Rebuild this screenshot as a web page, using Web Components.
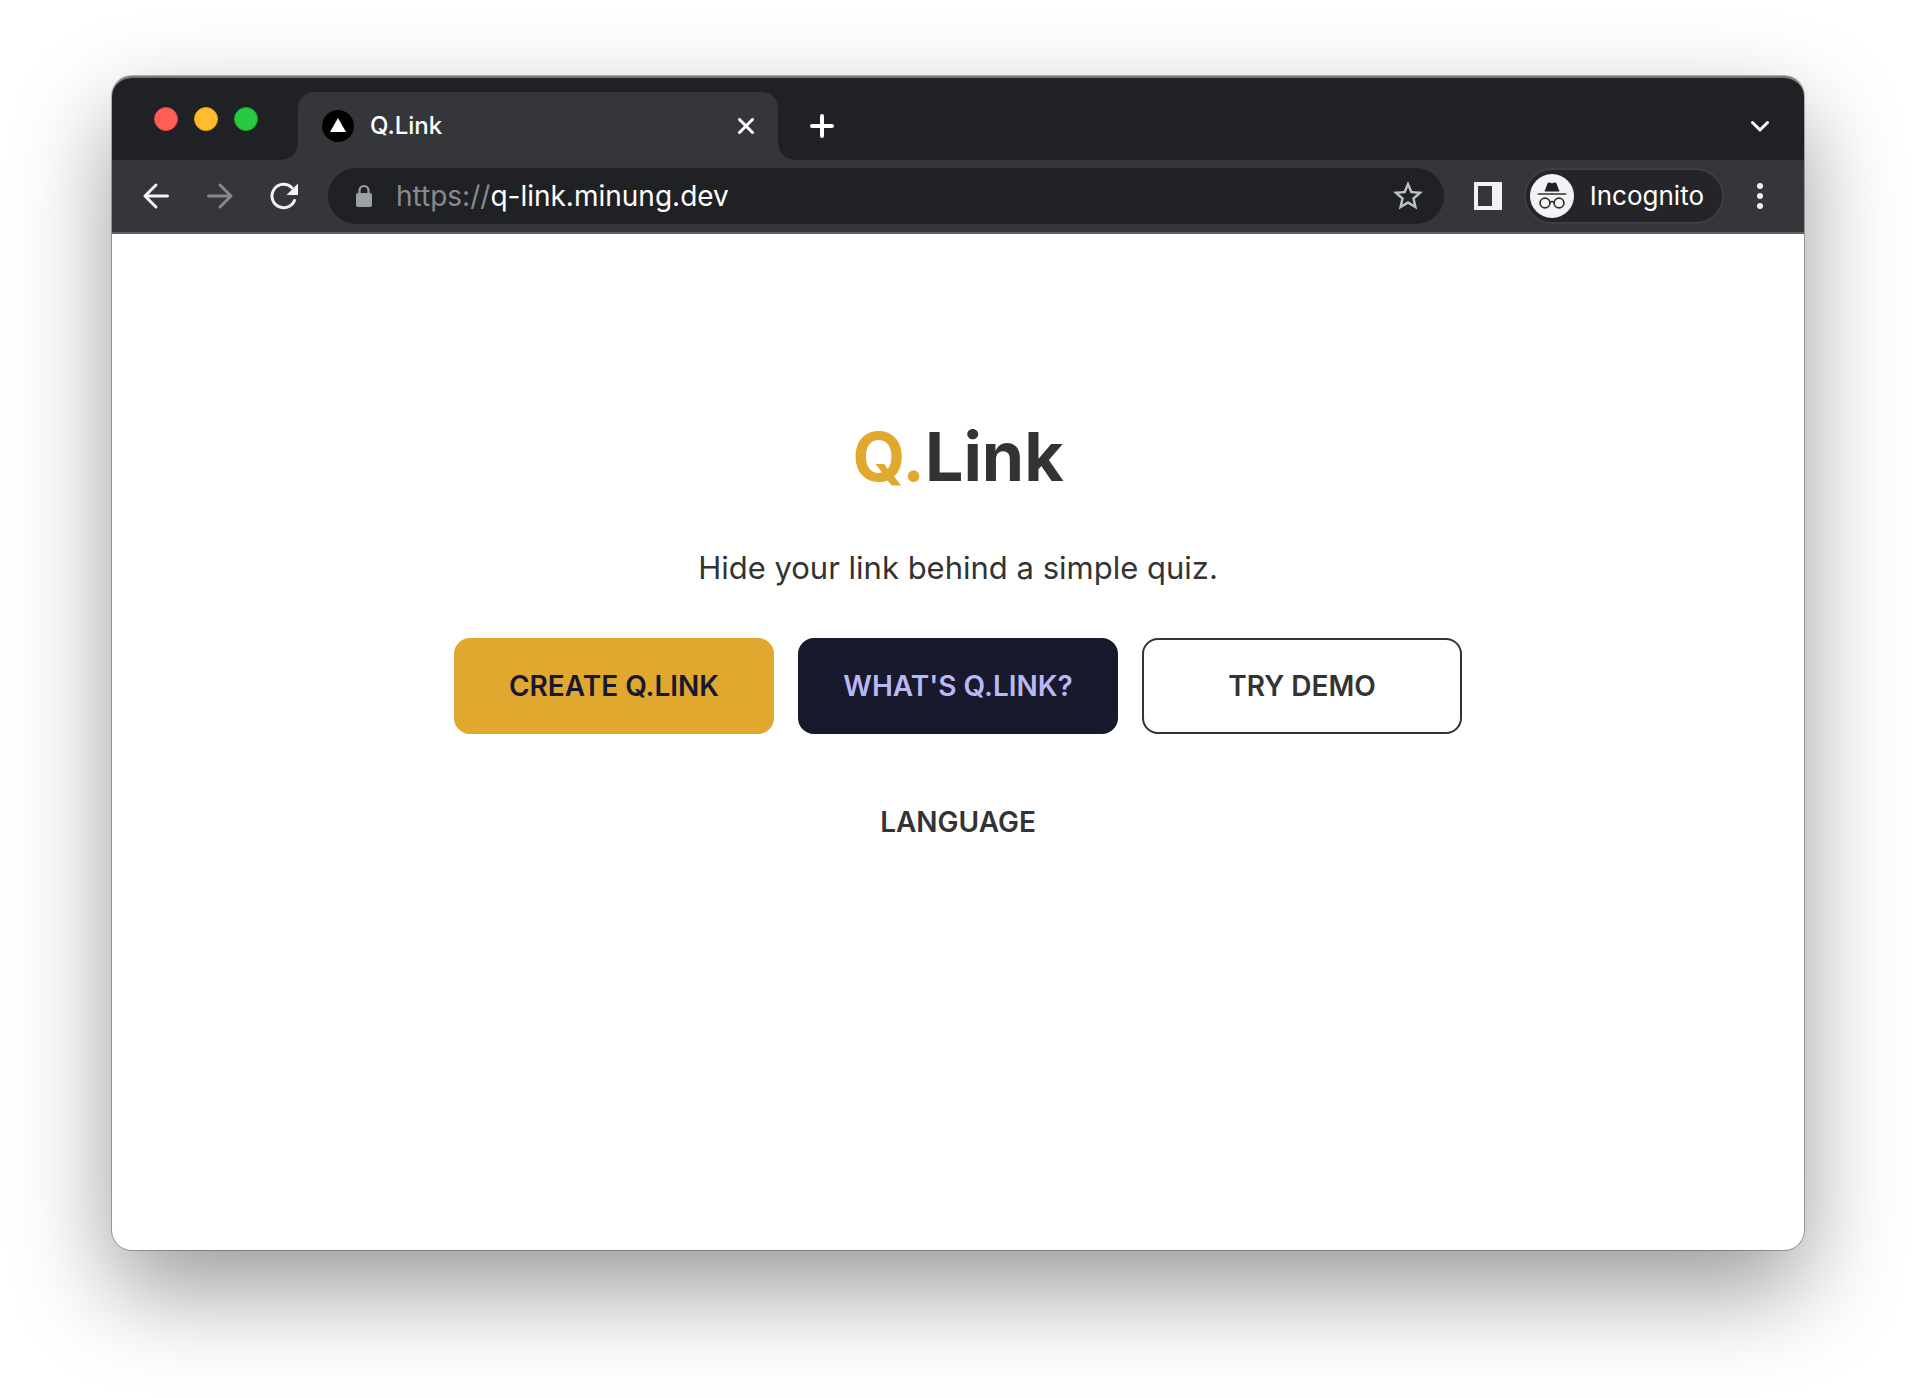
<!DOCTYPE html>
<html lang="en">
<head>
<meta charset="utf-8">
<title>Q.Link</title>
<style>
  html, body { margin: 0; }
  body {
    box-sizing: border-box;
    min-height: 100vh;
    padding: 76px 112px 148px;
    display: flex;
    background: #fff;
    font-family: Inter, "Noto Sans", sans-serif;
    color: #333;
  }
</style>
</head>
<body>
<browser-window>
  <tab-strip slot="chrome"><browser-tab>Q.Link</browser-tab></tab-strip>
  <browser-toolbar slot="chrome" scheme="https://" host="q-link.minung.dev"></browser-toolbar>
  <qlink-home></qlink-home>
</browser-window>
<script>
const define = (name, html, setup) => customElements.define(name, class extends HTMLElement {
  constructor() {
    super();
    this.attachShadow({ mode: 'open' }).innerHTML = `
      <style>
        *, *::before, *::after { box-sizing: border-box; }
        button { border: 0; margin: 0; padding: 0; background: none; font: inherit; color: inherit; cursor: pointer; }
        svg { display: block; fill: none; stroke-linecap: round; stroke-linejoin: round; }
      </style>` + html;
  }
  connectedCallback() { if (setup) setup(this, this.shadowRoot); }
});

define('browser-window', `
  <style>
    :host {
      flex: 1; min-width: 0; display: flex; flex-direction: column; overflow: hidden;
      box-sizing: border-box; border-top: 2px solid #747678; border-radius: 20px; background: #fff;
      box-shadow: 0 0 0 1px rgba(0,0,0,.28), 0 40px 96px rgba(0,0,0,.4);
    }
    main { flex: 1; display: flex; flex-direction: column; }
  </style>
  <slot name="chrome"></slot>
  <main><slot></slot></main>`);

define('window-controls', `
  <style>
    :host { display: flex; gap: 16px; align-items: center; }
    button { width: 24px; height: 24px; border-radius: 50%; border: 1px solid; }
    .close { background: #ff5f57; border-color: #e2463f; }
    .min { background: #febc2e; border-color: #e1a116; }
    .max { background: #28c840; border-color: #12ac28; }
  </style>
  <button class="close" aria-label="Close"></button>
  <button class="min" aria-label="Minimize"></button>
  <button class="max" aria-label="Zoom"></button>`);

define('browser-tab', `
  <style>
    :host { display: flex; align-items: flex-end; flex: 0 1 512px; min-width: 0; color: #fff; }
    .foot { width: 16px; height: 16px; flex: none; }
    .left { background: radial-gradient(circle at 0 0, #202124 15px, #35363a 16px); }
    .right { background: radial-gradient(circle at 100% 0, #202124 15px, #35363a 16px); }
    .tab {
      flex: 1; min-width: 0; height: 68px; padding: 0 24px; display: flex; align-items: center; gap: 16px;
      background: #35363a; border-radius: 16px 16px 0 0; font-size: 24px; line-height: 32px; font-weight: 500;
    }
    .title { flex: 1; }
  </style>
  <span class="foot left"></span>
  <div class="tab" role="tab" aria-selected="true">
    <svg width="32" height="32" viewBox="0 0 32 32"><circle cx="16" cy="16" r="16" fill="#000"/><path d="M16 8l8 14H8z" fill="#fff"/></svg>
    <span class="title"><slot></slot></span>
    <button aria-label="Close tab"><svg width="16" height="16" viewBox="0 0 16 16" stroke="#fff" stroke-width="3"><path d="M1.5 1.5l13 13M14.5 1.5l-13 13"/></svg></button>
  </div>
  <span class="foot right"></span>`);

define('tab-strip', `
  <style>
    :host { display: flex; height: 82px; align-items: flex-end; background: #202124; padding: 0 35px 0 42px; }
    window-controls { align-self: center; margin-right: 24px; }
    button { height: 68px; padding: 0 16px; }
    .menu { margin-left: auto; padding: 0; }
  </style>
  <window-controls></window-controls>
  <slot></slot>
  <button aria-label="New tab"><svg width="24" height="24" viewBox="0 0 24 24" stroke="#fff" stroke-width="4"><path d="M12 2v20M2 12h20"/></svg></button>
  <button class="menu" aria-label="Search tabs"><svg width="18" height="14" viewBox="0 0 18 14" stroke="#fff" stroke-width="3"><path d="M1.500 3.500L9 11l7.500-7.500"/></svg></button>`);

define('browser-toolbar', `
  <style>
    :host {
      display: flex; align-items: center; height: 74px; padding: 0 35px 0 28px;
      background: #35363a; border-bottom: 2px solid #5f6063; box-sizing: border-box;
      color: #fff; font-size: 28px; line-height: 32px;
    }
    .nav { display: flex; gap: 32px; margin-right: 28px; }
    .nav button { width: 32px; height: 32px; }
    .omnibox {
      flex: 1; min-width: 0; height: 56px; padding: 0 18px 0 26px; border-radius: 28px; background: #202124;
      display: flex; align-items: center;
    }
    label { display: flex; flex: 1; min-width: 0; margin-left: 22px; }
    .scheme { color: #898a8d; }
    input { flex: 1; min-width: 0; border: 0; padding: 0; margin: 0; background: none; color: inherit; font: inherit; height: 32px; outline: none; }
    .panel { margin: 0 22px 0 30px; }
    .incognito {
      height: 56px; padding: 0 18px 0 4px; border: 2px solid #3e3e43; border-radius: 28px; background: #242429;
      display: flex; align-items: center; gap: 16px; margin-right: 27px; font-size: 26px;
    }
    .more { width: 18px; display: flex; justify-content: center; }
  </style>
  <div class="nav">
    <button aria-label="Back"><svg width="32" height="32" viewBox="0 0 32 32" stroke="#f1f3f4" stroke-width="3"><path d="M27.500 16H5M16 5L5 16l11 11"/></svg></button>
    <button aria-label="Forward"><svg width="32" height="32" viewBox="0 0 32 32" stroke="#87888b" stroke-width="3"><path d="M4.500 16H27M16 5l11 11-11 11"/></svg></button>
    <button aria-label="Reload"><svg width="32" height="32" viewBox="0 0 32 32"><path d="M26.500 20.500A11.700 11.700 0 1 1 24 7.800" stroke="#f1f3f4" stroke-width="3"/><path d="M30 3.500V15H18.500z" fill="#f1f3f4"/></svg></button>
  </div>
  <div class="omnibox">
    <svg width="20" height="24" viewBox="0 0 20 24"><path d="M5.500 11V6.500a4.500 4.500 0 0 1 9 0V11" stroke="#9aa0a6" stroke-width="2.200"/><rect x="2" y="9" width="16" height="14" rx="2" fill="#9aa0a6"/></svg>
    <label><span class="scheme"></span><input aria-label="Address" spellcheck="false"></label>
    <button aria-label="Bookmark this page"><svg width="36" height="36" viewBox="0 0 24 24"><path fill="#bdc1c0" d="M22 9.240l-7.190-.620L12 2 9.190 8.630 2 9.240l5.460 4.730L5.820 21 12 17.270 18.180 21l-1.630-7.030L22 9.240zM12 15.400l-3.760 2.270 1-4.280-3.320-2.880 4.380-.380L12 6.100l1.710 4.040 4.380.380-3.320 2.880 1 4.280L12 15.400z"/></svg></button>
  </div>
  <button class="panel" aria-label="Side panel"><svg width="28" height="28" viewBox="0 0 28 28"><path fill="#f1f3f4" fill-rule="evenodd" d="M0 0h28v28H0zM4 4v20h14V4z"/></svg></button>
  <button class="incognito">
    <svg width="44" height="44" viewBox="0 0 44 44"><circle cx="22" cy="22" r="22" fill="#f1f3f4"/>
      <path fill="#202124" d="M14.500 17.500L17.500 9.500Q18 8.200 19.300 8.600L22 9.300l2.700-.7Q26 8.200 26.500 9.500l3 8z"/>
      <path d="M8.500 20h27" stroke="#303134" stroke-width="1.700"/>
      <g stroke="#303134" stroke-width="1.700"><circle cx="15" cy="29" r="4.900"/><circle cx="29" cy="29" r="4.900"/><path d="M20 28.400q2-1.600 4 0"/></g></svg>
    <span>Incognito</span>
  </button>
  <button class="more" aria-label="More"><svg width="6" height="28" viewBox="0 0 6 28"><g fill="#f1f3f4"><circle cx="3" cy="4" r="3"/><circle cx="3" cy="14" r="3"/><circle cx="3" cy="24" r="3"/></g></svg></button>`,
  (host, root) => {
    root.querySelector('.scheme').textContent = host.getAttribute('scheme');
    root.querySelector('input').setAttribute('value', host.getAttribute('host'));
  });

define('action-button', `
  <style>
    :host { display: block; flex: 0 1 320px; min-width: 0; }
    button {
      width: 100%; height: 96px; border: 2px solid transparent; border-radius: 16px;
      font-size: 28px; line-height: 32px; font-weight: 600; color: #333; white-space: nowrap;
    }
    :host([kind=primary]) button { background: #e0a82e; border-color: #e0a82e; color: #181830; }
    :host([kind=secondary]) button { background: #19192e; border-color: #19192e; color: #bab8f3; }
    :host([kind=outline]) button { border-color: #333; }
  </style>
  <button><slot></slot></button>`);

define('qlink-home', `
  <style>
    :host { display: flex; flex-direction: column; align-items: center; padding: 174px 24px 0; }
    h1 { margin: 0; font-size: 68px; line-height: 96px; font-weight: 700; color: #333; }
    h1 span { color: #e0a82e; }
    p { margin: 44px 0 0; font-size: 31px; line-height: 40px; color: #333; }
    .actions { display: flex; justify-content: center; gap: 24px; margin: 50px 0 40px; align-self: stretch; }
  </style>
  <h1><span>Q.</span>Link</h1>
  <p>Hide your link behind a simple quiz.</p>
  <div class="actions">
    <action-button kind="primary">CREATE Q.LINK</action-button>
    <action-button kind="secondary">WHAT'S Q.LINK?</action-button>
    <action-button kind="outline">TRY DEMO</action-button>
  </div>
  <action-button class="language">LANGUAGE</action-button>`);
</script>
</body>
</html>
